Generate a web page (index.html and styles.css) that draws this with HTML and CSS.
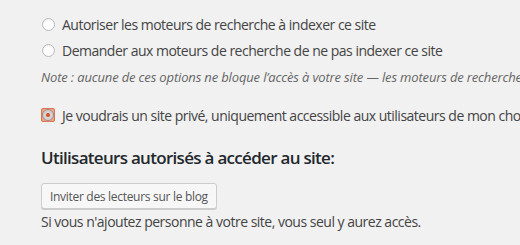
FILE: index.html
```html
<!DOCTYPE html>
<html lang="fr">
<head>
    <meta charset="UTF-8">
    <title>Confidentialité</title>
    <link rel="stylesheet" href="styles.css">
</head>
<body>
    <div class="settings">
        <ul class="options">
            <li class="option">
                <span class="radio"></span>
                <span>Autoriser les moteurs de recherche à indexer ce site</span>
            </li>
            <li class="option">
                <span class="radio"></span>
                <span>Demander aux moteurs de recherche de ne pas indexer ce site</span>
            </li>
        </ul>
        <p class="note">Note : aucune de ces options ne bloque l’accès à votre site — les moteurs de recherche peuvent choisir de respecter ou non votre demande.</p>
        <div class="option private">
            <span class="radio-focus"><span class="radio checked"></span></span>
            <span>Je voudrais un site privé, uniquement accessible aux utilisateurs de mon choix</span>
        </div>
        <h3>Utilisateurs autorisés à accéder au site:</h3>
        <button type="button" class="button">Inviter des lecteurs sur le blog</button>
        <p class="hint">Si vous n'ajoutez personne à votre site, vous seul y aurez accès.</p>
    </div>
</body>
</html>
```

FILE: styles.css
```css
body {
    margin: 0;
    background-color: #f1f1f1;
    color: #444;
    font-family: "Open Sans", "Liberation Sans", sans-serif;
    font-size: 14px;
    letter-spacing: -0.5px;
    overflow: hidden;
}
.settings {
    padding: 11px 0 0 41px;
    white-space: nowrap;
    overflow: hidden;
}
.options {
    list-style: none;
    margin: 0;
    padding: 0;
}
.option {
    display: flex;
    align-items: center;
    height: 26px;
    padding-left: 1px;
}
.radio {
    display: inline-block;
    width: 11px;
    height: 11px;
    border: 1px solid #b4b9be;
    border-radius: 50%;
    background-color: #fff;
    box-shadow: inset 0 1px 2px rgba(0,0,0,0.07);
    margin-right: 7px;
    flex-shrink: 0;
}
.note {
    margin: 0;
    height: 26px;
    line-height: 28px;
    font-style: italic;
    font-size: 13px;
    letter-spacing: -0.15px;
    color: #666;
}
.private {
    margin-top: 13px;
    padding-left: 0;
}
.radio-focus {
    display: inline-flex;
    align-items: center;
    justify-content: center;
    width: 12px;
    height: 12px;
    border: 1px solid #e0734f;
    border-radius: 2px;
    background-color: #f6a286;
    margin-right: 7px;
    flex-shrink: 0;
}
.radio.checked {
    width: 10px;
    height: 10px;
    margin: 0;
    border-color: #9a8f8a;
    background-color: #d9d3d0;
    position: relative;
}
.radio.checked::after {
    content: "";
    position: absolute;
    left: 3px;
    top: 3px;
    width: 4px;
    height: 4px;
    border-radius: 50%;
    background-color: #d8502a;
}
h3 {
    margin: 18px 0 0;
    font-size: 17px;
    font-weight: 600;
    line-height: 24px;
    letter-spacing: -0.7px;
    color: #23282d;
}
.button {
    display: block;
    margin-top: 13px;
    height: 26px;
    padding: 0 8px;
    font-family: inherit;
    font-size: 12px;
    letter-spacing: -0.3px;
    color: #555;
    background-color: #f7f7f7;
    border: 1px solid #ccc;
    border-radius: 3px;
    box-shadow: 0 1px 0 #ccc;
}
.hint {
    margin: 3px 0 0;
    line-height: 20px;
}
```
